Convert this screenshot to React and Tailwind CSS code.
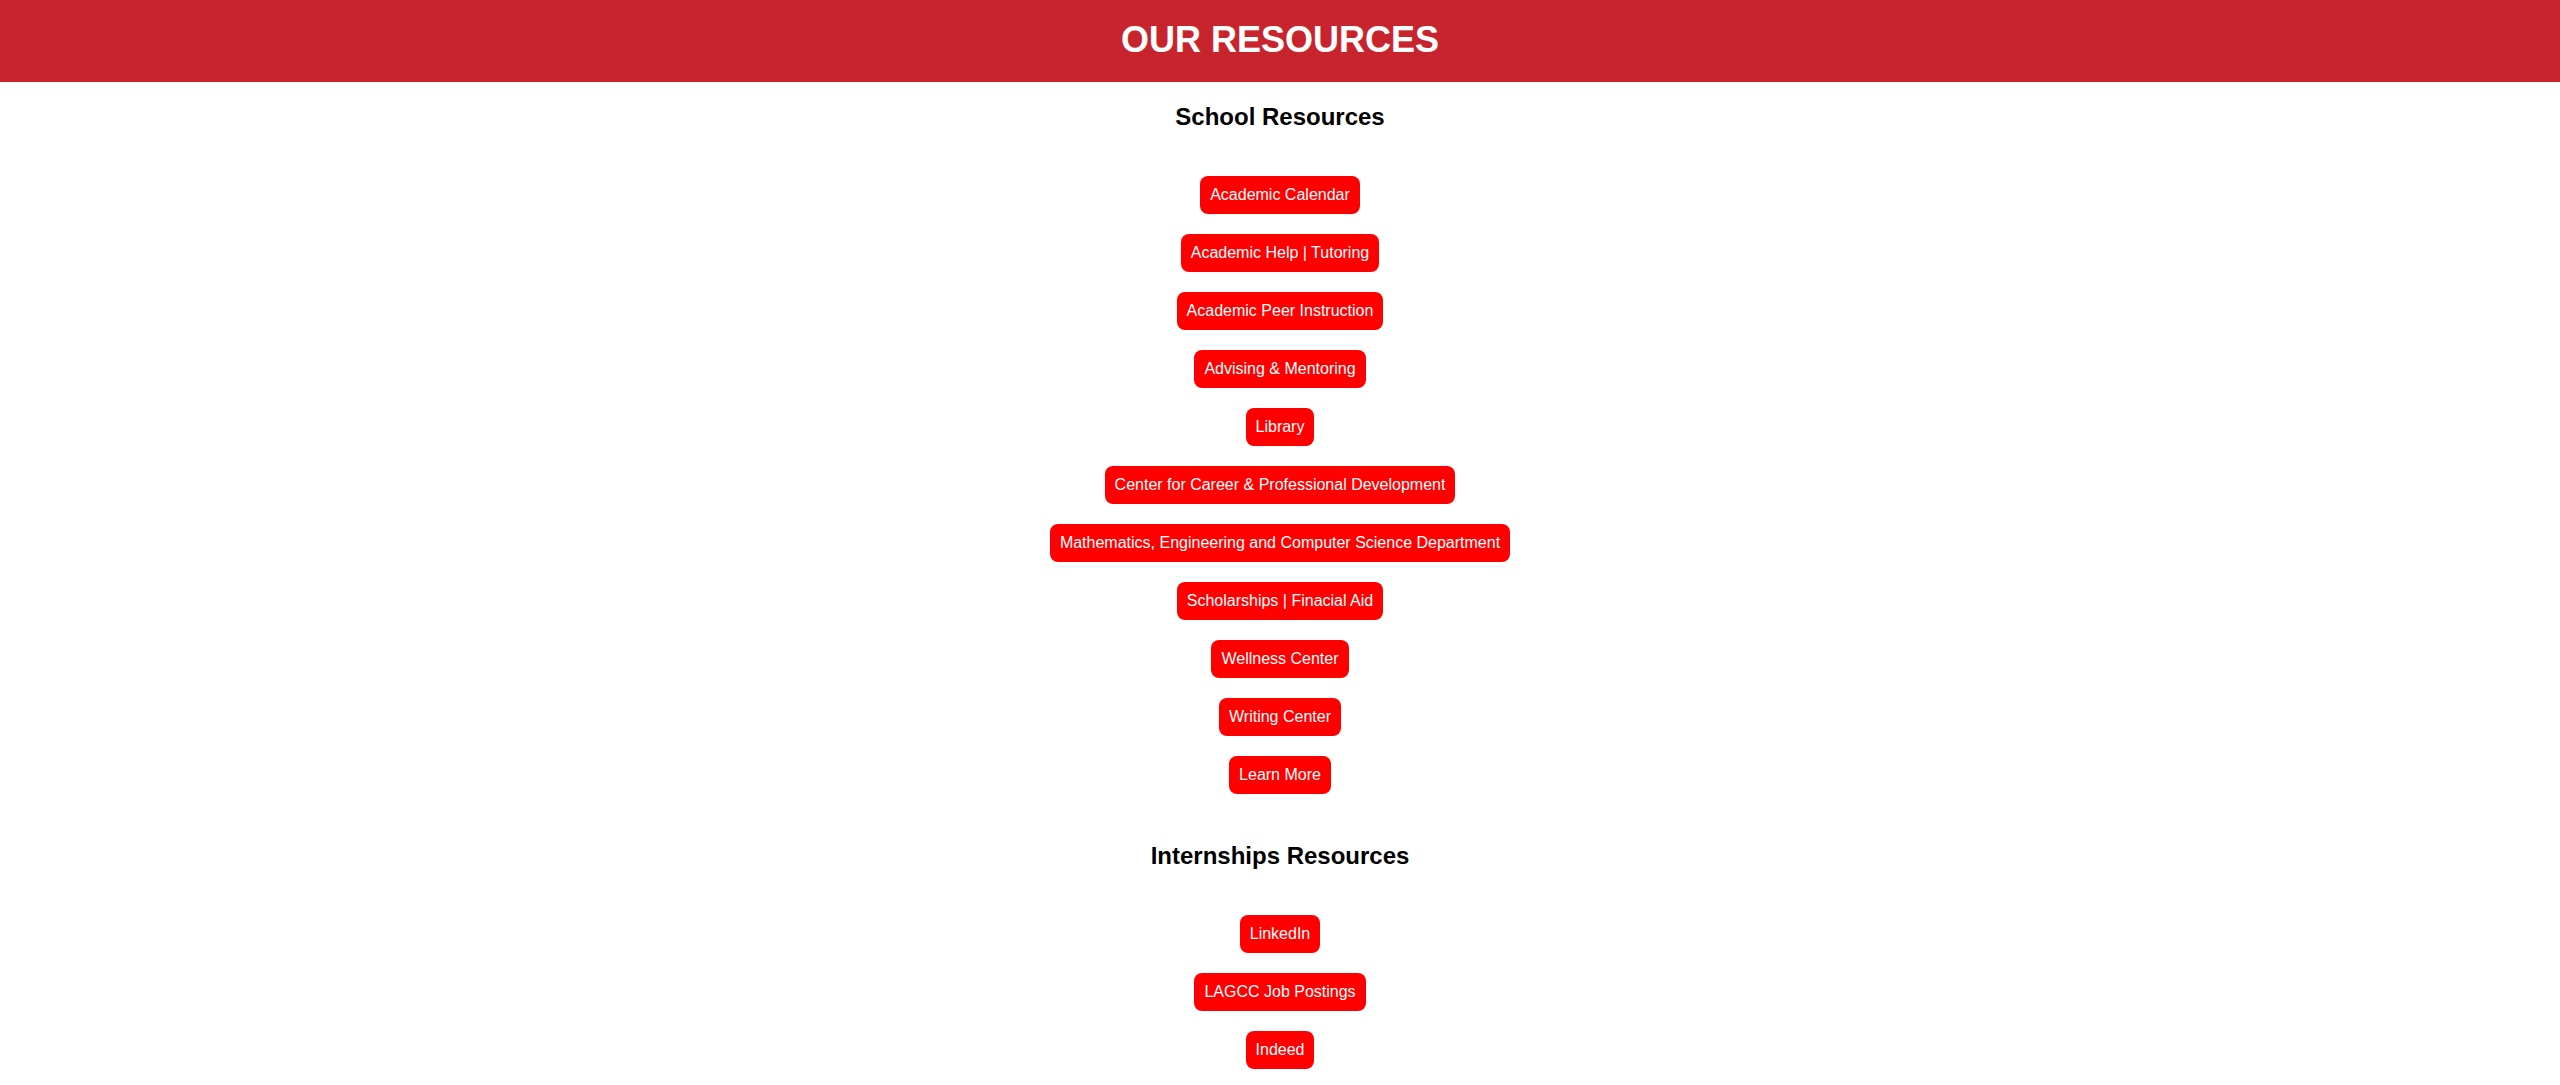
import React from 'react';

const schoolLinks = [
  'Academic Calendar',
  'Academic Help | Tutoring',
  'Academic Peer Instruction',
  'Advising & Mentoring',
  'Library',
  'Center for Career & Professional Development',
  'Mathematics, Engineering and Computer Science Department',
  'Scholarships | Finacial Aid',
  'Wellness Center',
  'Writing Center',
  'Learn More',
];

const internshipLinks = ['LinkedIn', 'LAGCC Job Postings', 'Indeed'];

const ResourceButton = ({ label }) => (
  <a
    href="#"
    className="bg-[#ff0000] text-white text-[16px] leading-[18px] px-[10px] py-[10px] rounded-[8px]"
  >
    {label}
  </a>
);

const Section = ({ title, links, className }) => (
  <section className={`flex flex-col items-center ${className}`}>
    <h2 className="text-[24px] leading-[28px] font-bold text-black">{title}</h2>
    <div className="flex flex-col items-center gap-[20px] mt-[45px]">
      {links.map((l) => (
        <ResourceButton key={l} label={l} />
      ))}
    </div>
  </section>
);

export default function App() {
  return (
    <div className="min-h-screen bg-white font-['Liberation_Sans',Arial,sans-serif]">
      <header className="h-[82px] bg-[#c8242d] flex justify-center pt-[20px]">
        <h1 className="text-white text-[36px] leading-[40px] font-bold">OUR RESOURCES</h1>
      </header>
      <Section title="School Resources" links={schoolLinks} className="mt-[21px]" />
      <Section title="Internships Resources" links={internshipLinks} className="mt-[48px]" />
    </div>
  );
}
